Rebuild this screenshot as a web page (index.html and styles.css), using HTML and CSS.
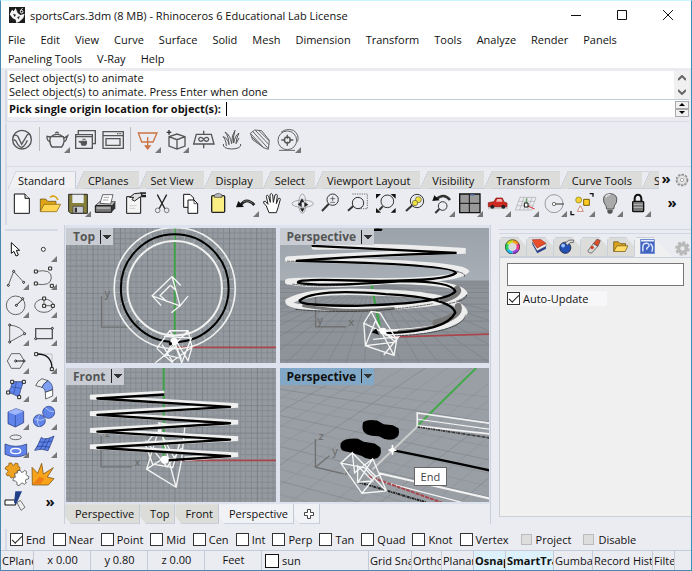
FILE: index.html
```
<!DOCTYPE html>
<html lang="en">

<head>
    <meta charset="UTF-8">
    <meta name="viewport" content="width=device-width, initial-scale=1.0">
    <title>sportsCars.3dm - Rhinoceros 6</title>
    <link rel="stylesheet" href="styles.css">
</head>

<body>
    <header class="title-bar">
        <svg class="app-icon" viewBox="0 0 48 48">
            <rect width="48" height="48" fill="#1c1c1c" />
            <path d="M2 22L9 8l5 5 6-10 6 15 8 6 13-4-4 13-12 11-9 4-2-10-9-4z" fill="#f2f2f2" />
            <path d="M12 20l9 3-4 7zM24 32l8-6-2 10z" fill="#1c1c1c" />
            <path d="M41 4q-7 3-7 10a4 4 0 1 0 3-4" fill="none" stroke="#fff" stroke-width="3" />
        </svg>
        <span class="title">sportsCars.3dm (8 MB) - Rhinoceros 6 Educational Lab License</span>
        <button class="win-btn" aria-label="Minimize"><svg viewBox="0 0 10 10"><path d="M0 5.5h10" /></svg></button>
        <button class="win-btn" aria-label="Maximize"><svg viewBox="0 0 10 10"><path d="M.5 .5h9v9h-9z" /></svg></button>
        <button class="win-btn" aria-label="Close"><svg viewBox="0 0 10 10"><path d="M0 0l10 10M10 0L0 10" /></svg></button>
    </header>

    <nav class="menu">
        <button>File</button>
        <button>Edit</button>
        <button>View</button>
        <button>Curve</button>
        <button>Surface</button>
        <button>Solid</button>
        <button>Mesh</button>
        <button>Dimension</button>
        <button>Transform</button>
        <button>Tools</button>
        <button>Analyze</button>
        <button>Render</button>
        <button>Panels</button>
        <button>Paneling Tools</button>
        <button>V-Ray</button>
        <button>Help</button>
    </nav>

    <section class="command">
        <div class="history">
            <div class="history-text">
                <p>Select object(s) to animate</p>
                <p>Select object(s) to animate. Press Enter when done</p>
            </div>
            <div class="scroll">
                <button aria-label="Scroll up"><svg viewBox="0 0 8 6"><path d="M0 5l4-4 4 4" /></svg></button>
                <button aria-label="Scroll down"><svg viewBox="0 0 8 6"><path d="M0 1l4 4 4-4" /></svg></button>
            </div>
        </div>
        <div class="prompt">
            <label for="cmd">Pick single origin location for object(s):</label>
            <input type="text" id="cmd">
            <div class="spin">
                <button aria-label="Previous"><svg viewBox="0 0 6 3"><path d="M0 3l3-3 3 3z" /></svg></button>
                <button aria-label="Next"><svg viewBox="0 0 6 3"><path d="M0 0l3 3 3-3z" /></svg></button>
            </div>
        </div>
    </section>

    <!-- V-Ray toolbar -->
    <section class="toolbar vray">
        <button class="tool" aria-label="V-Ray"><svg viewBox="24 3 84 84">
            <g class="ln thick"><circle cx="66" cy="44" r="28" /><path d="M42 32q7-4 12 3l11 23 17-29q6-5 9 1M40 46q5-3 9 4 8 17 17 17 9-3 16-21" /></g></svg></button>
        <i class="sep"></i>
        <button class="tool more" aria-label="Render"><svg viewBox="126 3 84 84">
            <g class="ln thick"><path d="M149 35q-7 16 4 31h29q11-14 5-31zM150 35q18-14 36 0M163 25q5-7 10 0M150 52q-14-5-12-18l9 2M188 40l12-8-6 15-6 5" /></g></svg></button>
        <button class="tool" aria-label="Frame buffer"><svg viewBox="210 3 84 84">
            <g class="ln thick"><path d="M232 28v-11h51v39h-8M224 29h50v41h-50zM224 35h50" /></g>
            <path d="M239 47h19q2 9-4 15h-12q-3-5-3-8l-6-2v-5l6 2zM244 44h10v-3h-10z" fill="#555" /></svg></button>
        <button class="tool" aria-label="Render window"><svg viewBox="294 3 84 84">
            <g class="ln thick"><path d="M306 20h61v50h-61zM306 32h61M315 41h42v20h-42z" /></g><path d="M348 26h14" stroke="#555" stroke-width="4" stroke-dasharray="3 2" /></svg></button>
        <i class="sep"></i>
        <button class="tool more" aria-label="Rectangle light"><svg viewBox="397 3 84 84">
            <g class="ln orange"><path d="M410 24h56l-12 27h-34zM438 36v30" /><path d="M431 63h14l-7 9z" fill="#cb7443" /></g></svg></button>
        <button class="tool more" aria-label="Proxy"><svg viewBox="481 3 84 84">
            <g class="ln thick"><path d="M502 35l24-8 24 8v28l-24 9-24-9zM502 35l24 9 24-9M526 44v28" /></g>
            <path d="M495 22h14M502 15v14" stroke="#333" stroke-width="4" /></svg></button>
        <button class="tool" aria-label="Infinite plane"><svg viewBox="565 3 84 84">
            <g class="ln thick"><path d="M584 28h45l8 29h-61zM606 28v-11M606 57v13M606 43q-6-8-12-5-6 5 0 10 6 3 12-5 6-8 12-5 6 5 0 10-6 3-12-5" /></g></svg></button>
        <button class="tool" aria-label="Fur"><svg viewBox="649 3 84 84">
            <g class="ln thin"><path d="M665 57q-2 14 25 15 30-1 27-15M674 63q-1-20-10-28 15 4 18 24-1-26-12-38 16 9 20 35 0-26 10-40-7 22-4 38 4-22 16-30-8 14-9 32l9-17" /></g></svg></button>
        <button class="tool" aria-label="Clipper"><svg viewBox="733 3 84 84">
            <g class="ln"><path d="M746 25l13-10 21 2 23 29-3 27-14-5-33-24zM746 25l40 43M753 19l47 52M761 16l41 43M771 16l32 32M748 34l38 34" /></g></svg></button>
        <button class="tool more" aria-label="Lens"><svg viewBox="817 3 84 84">
            <g class="ln"><circle cx="857" cy="46" r="28" /><path d="M838 22q15-13 37-6 19 12 13 34M832 76h48" /></g>
            <g class="ln thick"><circle cx="857" cy="45" r="9" /><path d="M857 29v12M857 50v12M839 45h12M863 45h12" /></g></svg></button>
    </section>

    <section class="tabs">
        <button class="tab active">Standard</button>
        <button class="tab">CPlanes</button>
        <button class="tab">Set View</button>
        <button class="tab">Display</button>
        <button class="tab">Select</button>
        <button class="tab">Viewport Layout</button>
        <button class="tab">Visibility</button>
        <button class="tab">Transform</button>
        <button class="tab">Curve Tools</button>
        <button class="tab cut">Surface Tools</button>
        <button class="chev" aria-label="More tabs">»</button>
        <button class="gear" aria-label="Toolbar options"><svg viewBox="0 0 42 42">
            <circle cx="21" cy="21" r="17" fill="none" stroke="#888" stroke-width="4" stroke-dasharray="7 4" />
            <circle cx="21" cy="21" r="14" fill="#e4e4e4" stroke="#999" stroke-width="2" /><circle cx="21" cy="21" r="5" fill="#fff" stroke="#888" stroke-width="2" /></svg></button>
    </section>

    <!-- Standard toolbar -->
    <section class="toolbar standard">
        <button class="tool" aria-label="New"><svg viewBox="24 195 84 84">
            <path d="M43 207h32l13 13v45H43z" fill="#fff" stroke="#111" stroke-width="3" /><path d="M75 207v13h13" fill="#ddd" stroke="#111" stroke-width="3" /></svg></button>
        <button class="tool" aria-label="Open"><svg viewBox="108 195 84 84">
            <path d="M121 260v-38h16l6 7h25v9" fill="#dfa517" stroke="#5a4308" stroke-width="2" /><path d="M121 260l11-22h50l-12 22z" fill="#ffd552" stroke="#7b5b0a" stroke-width="2" />
            <path d="M150 217q15-10 24 8" fill="none" stroke="#dba40f" stroke-width="5" /></svg></button>
        <button class="tool more" aria-label="Save"><svg viewBox="192 195 84 84">
            <path d="M206 208h56v57h-50l-6-6z" fill="#86803b" stroke="#222" stroke-width="3" /><path d="M217 209h34v25h-34z" fill="#e9edf2" /><path d="M219 244h31v20h-31z" fill="#c9cbd2" stroke="#333" stroke-width="2" /><path d="M224 248h7v14h-7z" fill="#333" /></svg></button>
        <button class="tool" aria-label="Print"><svg viewBox="276 195 84 84">
            <path d="M287 241l12-11h47l-10 14z" fill="#bbb" stroke="#222" stroke-width="2" /><path d="M300 235l8-26h31l-7 28z" fill="#fff" stroke="#222" stroke-width="2" /><path d="M286 242h49v20h-49z" fill="#777" stroke="#111" stroke-width="3" /><path d="M335 242l11-12v20l-11 12z" fill="#333" /><path d="M290 249h41" stroke="#ddd" stroke-width="3" /><path d="M311 217h16M309 225h16" stroke="#777" stroke-width="2" /></svg></button>
        <button class="tool" aria-label="Properties"><svg viewBox="360 195 84 84">
            <path d="M380 215h42v50h-42z" fill="#f5f5f5" stroke="#111" stroke-width="3" /><path d="M388 242h22M388 250h18" stroke="#bbb" stroke-width="2" /><path d="M389 217l14-11 20-2 6 8-12 6-13 10-8-4 5-7z" fill="#ddd" stroke="#222" stroke-width="3" /><path d="M421 202h17v15h-13z" fill="#222" /><path d="M427 208h11" stroke="#ddd" stroke-width="3" /></svg></button>
        <button class="tool" aria-label="Cut"><svg viewBox="444 195 84 84">
            <path d="M472 209l23 43M500 209l-23 43" stroke="#222" stroke-width="4" /><g fill="none" stroke="#777" stroke-width="3"><circle cx="473" cy="256" r="7" /><circle cx="500" cy="256" r="7" /></g></svg></button>
        <button class="tool" aria-label="Copy"><svg viewBox="528 195 84 84">
            <path d="M551 208h19l11 11v28h-30z" fill="#fff" stroke="#111" stroke-width="3" /><path d="M564 225h18l11 11v29h-29z" fill="#fff" stroke="#111" stroke-width="3" /><path d="M582 225v11h11" fill="none" stroke="#111" stroke-width="2" /></svg></button>
        <button class="tool" aria-label="Paste"><svg viewBox="612 195 84 84">
            <rect x="635" y="212" width="39" height="50" rx="3" fill="#fbef83" stroke="#222" stroke-width="4" /><path d="M643 217v-7l8-4h8l7 4v7z" fill="#bbb" stroke="#333" stroke-width="2" /></svg></button>
        <button class="tool more" aria-label="Undo"><svg viewBox="696 195 84 84">
            <path d="M722 240q17-25 41 0" fill="none" stroke="#222" stroke-width="8" /><path d="M708 247l7-19 17 18z" fill="#111" /><path d="M729 231q15-9 29 5" fill="none" stroke="#999" stroke-width="2" /></svg></button>
        <button class="tool" aria-label="Pan"><svg viewBox="780 195 84 84">
            <path d="M807 263l-8-20-8-9q-2-7 5-5l8 9-5-24q2-8 7 0l5 18-1-23q4-7 8 0l2 23 5-22q6-5 7 1l-3 25 6-15q6-4 6 2l-7 25-5 15z" fill="#fff" stroke="#222" stroke-width="3" /></svg></button>
        <button class="tool" aria-label="Rotate view"><svg viewBox="864 195 84 84">
            <g fill="none" stroke="#888" stroke-width="2"><ellipse cx="908" cy="236" rx="32" ry="11" /><ellipse cx="907" cy="236" rx="11" ry="29" /></g><path d="M893 238l12-9v18zM925 239l-12-8v15zM906 220l7 12h-14zM907 262l-7-12h14z" fill="#222" /></svg></button>
        <button class="tool" aria-label="Zoom dynamic"><svg viewBox="48 75 84 84">
            <g class="lens"><path d="M86 117l-20 21" /><circle cx="98" cy="104" r="17" /></g><path d="M91 101h14M98 94v14M91 112h14" stroke="#333" stroke-width="2" /></svg></button>
        <button class="tool" aria-label="Zoom window"><svg viewBox="132 75 84 84">
            <path d="M157 87h45v44h-30" fill="none" stroke="#333" stroke-width="2" stroke-dasharray="4 3" /><g class="lens"><path d="M160 123l-16 14" /><circle cx="174" cy="114" r="17" /></g></svg></button>
        <button class="tool" aria-label="Zoom extents"><svg viewBox="216 75 84 84">
            <path d="M228 87h15l-15 14zM287 87h-15l15 14zM228 143h15l-15-14zM287 143h-15l15-14z" fill="#111" /><g class="lens"><path d="M248 124l-10 11" /><circle cx="262" cy="109" r="19" /></g></svg></button>
        <button class="tool" aria-label="Zoom selected"><svg viewBox="300 75 84 84">
            <g class="lens"><path d="M337 121l-19 17" /><circle cx="351" cy="108" r="20" /></g><circle cx="355" cy="104" r="9" fill="#f2e23c" stroke="#554" stroke-width="2" /><circle cx="345" cy="114" r="8" fill="#f2e23c" stroke="#554" stroke-width="2" /></svg></button>
        <button class="tool more" aria-label="Undo view"><svg viewBox="384 75 84 84">
            <path d="M409 103q22-21 41 2" fill="none" stroke="#333" stroke-width="8" /><path d="M397 108l6-17 16 15z" fill="#111" /><g class="lens"><path d="M418 132l-12 12" /><circle cx="428" cy="123" r="13" /></g></svg></button>
        <button class="tool more" aria-label="Four views"><svg viewBox="468 75 84 84">
            <path d="M479 87h61v56h-61z" fill="#999" stroke="#111" stroke-width="4" /><path d="M480 115h60M508 88v55" stroke="#111" stroke-width="3" /><path d="M511 90h12" stroke="#5577bb" stroke-width="4" /></svg></button>
        <button class="tool more" aria-label="Shade car"><svg viewBox="552 75 84 84">
            <path d="M564 129h60" stroke="#ccc" stroke-width="7" /><path d="M565 125v-12l17-3 6-11h19l5 12 9 3v11z" fill="#d12820" stroke="#7b100c" stroke-width="2" /><path d="M592 102h12l4 8h-20z" fill="#f5b9b5" /><circle cx="577" cy="125" r="6" fill="#222" /><circle cx="610" cy="125" r="6" fill="#222" /></svg></button>
        <button class="tool more" aria-label="Construction plane"><svg viewBox="636 75 84 84">
            <path d="M660 97h48l-13 38h-49zM656 109h48M651 122h48M672 97l-13 38M684 97l-13 38M696 97l-13 38" fill="none" stroke="#aaa" stroke-width="2" /><path d="M679 120v-20" stroke="#3c9a3c" stroke-width="3" /><path d="M679 121l25 11" stroke="#d33" stroke-width="3" /><path d="M673 114h11v12h-11z" fill="#fff" stroke="#111" stroke-width="3" /></svg></button>
        <button class="tool more" aria-label="Osnap circle"><svg viewBox="720 75 84 84">
            <circle cx="762" cy="116" r="27" fill="none" stroke="#999" stroke-width="3" /><circle cx="762" cy="117" r="5" fill="#fff" stroke="#333" stroke-width="2" /><path d="M767 117h25" stroke="#333" stroke-width="3" /></svg></button>
        <button class="tool more" aria-label="Selection filter"><svg viewBox="804 75 84 84">
            <circle cx="836" cy="105" r="9" fill="#f5d234" stroke="#8a7411" stroke-width="2" /><path d="M851 103h17v18h-17z" fill="#ffcd22" stroke="#775d00" stroke-width="3" /><path d="M841 122l9 17h-18z" fill="#fff" stroke="#b75836" stroke-width="2" /><path d="M869 86h10v9M813 138v11h10" fill="none" stroke="#111" stroke-width="4" /></svg></button>
        <button class="tool more" aria-label="Lights"><svg viewBox="888 75 84 84">
            <path d="M920 132q0-10-8-19-7-26 18-27 26 1 19 27-8 9-8 19z" fill="#aaa" stroke="#555" stroke-width="3" /><path d="M917 97q4-9 14-8" stroke="#eee" stroke-width="4" fill="none" /><path d="M922 134h16v8l-5 4h-7l-4-4z" fill="#555" /></svg></button>
        <button class="tool more" aria-label="Lock"><svg viewBox="972 75 84 84">
            <path d="M1004 110v-9q1-12 10-12t10 12v9" fill="none" stroke="#111" stroke-width="6" /><rect x="998" y="109" width="33" height="31" rx="3" fill="#777" stroke="#111" stroke-width="4" /><path d="M1001 118h27M1001 127h27" stroke="#bbb" stroke-width="3" /></svg></button>
        <button class="chev" aria-label="More tools">»</button>
    </section>

    <main class="work">
        <aside class="sidebar">
            <button class="tool" aria-label="Select"><svg viewBox="6 27 84 84">
                <path d="M34 50v32l8-6 6 14 7-3-6-14h10z" fill="#fff" stroke="#111" stroke-width="3" /></svg></button>
            <button class="tool more" aria-label="Point"><svg viewBox="90 27 84 84"><circle cx="130" cy="70" r="6" fill="#fff" stroke="#333" stroke-width="3" /></svg></button>
            <button class="tool more" aria-label="Polyline"><svg viewBox="6 111 84 84">
                <path class="ln" d="M25 178l16-42 30 33" /><g class="dot"><circle cx="25" cy="178" r="3" /><circle cx="41" cy="136" r="3" /><circle cx="71" cy="169" r="3" /></g></svg></button>
            <button class="tool more" aria-label="Curve"><svg viewBox="90 111 84 84">
                <path class="ln" d="M108 136q48-8 46 20-2 26-46 18" /><path class="box" d="M103 132h9v9h-9zM146 123h9v9h-9zM103 168h9v9h-9zM151 175h9v9h-9z" /></svg></button>
            <button class="tool more" aria-label="Circle"><svg viewBox="6 195 84 84">
                <circle class="ln" cx="47" cy="238" r="28" /><path d="M49 238l19-19" stroke="#111" stroke-width="3" /><g class="dot"><circle cx="49" cy="238" r="3" /><circle cx="68" cy="218" r="3" /></g></svg></button>
            <button class="tool more" aria-label="Ellipse"><svg viewBox="90 195 84 84">
                <ellipse class="ln" cx="132" cy="239" rx="28" ry="20" /><path class="ln" d="M132 218v21h27" /><path class="box" d="M128 213h9v9h-9zM128 235h9v9h-9zM154 235h9v9h-9z" /></svg></button>
            <button class="tool more" aria-label="Arc"><svg viewBox="6 279 84 84">
                <path class="ln" d="M29 297q35 4 45 26l-45 25z" /><g class="dot"><circle cx="29" cy="297" r="3" /><circle cx="74" cy="323" r="3" /><circle cx="29" cy="348" r="3" /></g></svg></button>
            <button class="tool more" aria-label="Rectangle"><svg viewBox="90 279 84 84">
                <path class="ln thick" d="M107 308h50v30h-50z" /><g class="dot"><circle cx="157" cy="307" r="3" /><circle cx="107" cy="338" r="3" /></g></svg></button>
            <button class="tool more" aria-label="Polygon"><svg viewBox="6 363 84 84">
                <path class="ln" d="M34 383h26l13 22-13 22H34l-12-22z" /><path d="M47 405h24" stroke="#111" stroke-width="3" /><g class="dot"><circle cx="47" cy="405" r="3" /><circle cx="72" cy="405" r="3" /></g></svg></button>
            <button class="tool more" aria-label="Fillet curves"><svg viewBox="90 363 84 84">
                <path d="M108 384h48v45" fill="none" stroke="#aaa" stroke-width="2" /><path d="M108 384q48-2 48 45" fill="none" stroke="#111" stroke-width="4" /><path class="box" d="M104 380h9v9h-9zM151 425h9v9h-9z" /></svg></button>
            <button class="tool more" aria-label="Surface from points"><svg viewBox="6 447 84 84">
                <path class="blue" d="M36 467h35q-11 24-14 46-16-9-33-14 12-14 12-32z" /><path d="M34 483q16 1 31 5M49 467q-2 21-9 37" stroke="#2c4a9a" fill="none" stroke-width="2" /><path class="box" d="M32 463h9v9h-9zM67 463h9v9h-9zM20 495h9v9h-9zM53 509h9v9h-9z" /></svg></button>
            <button class="tool more" aria-label="Loft"><svg viewBox="90 447 84 84">
                <path d="M107 479q5-15 19-21l18 6q-12 6-18 20z" fill="#eee" stroke="#222" stroke-width="2" /><path d="M144 464q14 8 14 27l-22 8q0-12-10-15 5-13 18-20z" fill="#7f9ff0" stroke="#1c2f70" stroke-width="2" /><path d="M136 499l22-8v19l-21 9z" fill="#fff" stroke="#222" stroke-width="2" /></svg></button>
            <button class="tool more" aria-label="Box"><svg viewBox="6 531 84 84">
                <path class="blue" d="M24 558l24-10 23 8v34l-25 13-22-10z" /><path d="M24 558l22 9 25-11-23-8z" fill="#9fb5ff" /><path d="M46 567v36" stroke="#284199" stroke-width="2" /></svg></button>
            <button class="tool more" aria-label="Boolean union"><svg viewBox="90 531 84 84">
                <circle class="blue" cx="146" cy="559" r="18" /><circle class="blue" cx="118" cy="584" r="18" /><path d="M103 578q18 10 32 0M118 567q-11 17 0 34M136 545q13 14 27 12" fill="none" stroke="#dce4ff" stroke-width="2" /></svg></button>
            <button class="tool more" aria-label="Project"><svg viewBox="6 615 84 84">
                <ellipse class="ln" cx="47" cy="634" rx="17" ry="7" /><path class="blue" d="M15 654q33 14 65 0v31q-32 15-65 0z" /><ellipse cx="47" cy="675" rx="15" ry="8" fill="#6687e7" stroke="#fff" stroke-width="4" /></svg></button>
            <button class="tool more" aria-label="Mesh"><svg viewBox="90 615 84 84">
                <path class="blue" d="M104 673q12-18 20-39 10 11 38-4-8 23-18 44-20-8-40-1z" /><path d="M111 662q17-5 38 2M118 648q18 3 37-3M139 636q-8 14-18 34M151 634q-9 17-18 38" fill="none" stroke="#1d3b8c" stroke-width="2" /></svg></button>
            <button class="tool" aria-label="Plugins"><svg viewBox="6 699 84 84">
                <path d="M18 722l8-3 1-8 8 0 3 7 5-1 3-6 8 2 0 8 6 3-1 8-8 3 1 5 6 5-4 7-8-2-5 4-8 2-4-7-8 0-3-6 6-6-2-5-7-3z" fill="#eda321" stroke="#7b4e05" stroke-width="2" /><path d="M44 742l8-1 1-7 8-1 3 6 6-1 4-5 6 4-2 8 3 4 6 3-2 7-7 1-2 5 3 6-6 4-6-4-6 3-3 5-7-2 0-8-5-4-7-1 1-7 6-3z" fill="#fff" stroke="#333" stroke-width="2" /></svg></button>
            <button class="tool" aria-label="Explode"><svg viewBox="90 699 84 84">
                <path d="M96 724l17 18 12-30 5 32 30-19-18 28 20 5-17 19H97z" fill="#f7a31c" stroke="#6b4307" stroke-width="2" /><path d="M99 773l20-21 14 7-12 14z" fill="#ed7b16" /></svg></button>
            <button class="tool" aria-label="Trim"><svg viewBox="6 783 84 84">
                <path d="M15 822h32v15H15z" fill="#fff" stroke="#111" stroke-width="3" /><path d="M46 796h20l-17 38-7-3z" fill="#20408a" /><path d="M51 830l10-7 14 21-12 9z" fill="#eee" stroke="#777" stroke-width="3" /></svg></button>
            <button class="tool chev" aria-label="More tools">»</button>
        </aside>

        <section class="views">
            <div class="view-grid">
                <div class="view">
                    <svg viewBox="6 9 630 405" preserveAspectRatio="xMidYMid slice">
                        <defs>
                            <pattern id="grid" width="82" height="82" patternUnits="userSpaceOnUse" x="4" y="40">
                                <path d="M16 0v82M33 0v82M49 0v82M66 0v82M0 16h82M0 33h82M0 49h82M0 66h82" stroke="#838a90" stroke-width="3" />
                                <path d="M1 0v82M0 1h82" stroke="#757b82" stroke-width="3" />
                            </pattern>
                        </defs>
                        <rect width="700" height="500" fill="#949a9f" />
                        <rect width="700" height="500" fill="url(#grid)" />
                        <path d="M333 9v359" stroke="#3fa447" stroke-width="6" />
                        <path d="M333 368h310" stroke="#a9464d" stroke-width="5" />
                        <path d="M113 214v93h92" class="axis" />
                        <text x="122" y="216">y</text>
                        <text x="212" y="305">x</text>
                        <g fill="none">
                            <circle cx="333" cy="190" r="162" stroke="#b4b8bb" stroke-width="34" stroke-dasharray="2 31" />
                            <circle cx="333" cy="190" r="182" stroke="#f1f1f1" stroke-width="5" />
                            <circle cx="333" cy="190" r="162" stroke="#000" stroke-width="6" />
                            <circle cx="333" cy="190" r="142" stroke="#f1f1f1" stroke-width="6" />
                            <path class="wire" d="M325 155l-60 58 27 29M325 155l26 27M325 155l24 88 24-29M349 243l-26 21M265 213l84 30M320 181l-31 31 21 19M320 181l16 15" />
                            <path class="wire" d="M279 371l39-53h55l12 49-62 45-44-41M318 318l55 90 12-41M300 335l83 5-29 74-18-49-61 49M306 388l67-70M295 360l33 54M330 346l-23 45 45 10z" />
                        </g>
                        <circle cx="331" cy="350" r="11" fill="#fff" />
                        <circle cx="320" cy="357" r="5" />
                    </svg>
                    <button class="view-label"><b>Top</b></button>
                </div>
                <div class="view">
                    <svg viewBox="12 9 630 405" preserveAspectRatio="xMidYMid slice">
                        <defs>
                            <linearGradient id="sky" x1="0" y1="0" x2="0" y2="1">
                                <stop offset="0" stop-color="#9ba2aa" />
                                <stop offset="1" stop-color="#a7aeb6" />
                            </linearGradient>
                        </defs>
                        <rect width="660" height="167" fill="url(#sky)" />
                        <rect y="166" width="660" height="260" fill="#8d9398" />
                        <path d="M0 172h660M0 180h660M0 190h660M0 203h660M0 219h660M0 238h660M0 261h660M0 289h660M0 322h660M0 361h660M0 406h660" stroke="#7b8187" stroke-width="2" />
                        <path d="M290 166L-700 414M290 166L-500 414M290 166L-340 414M290 166L-220 414M290 166L-120 414M290 166L-40 414M290 166L30 414M290 166L95 414M290 166l-135 248M290 166l-80 248M290 166l-25 248M290 166l30 248M290 166l85 248M290 166l140 248M290 166l200 248M290 166l270 248M290 166l350 248M290 166l450 248M290 166l570 248M290 166l720 248M290 166l950 248" stroke="#7b8187" stroke-width="2" />
                        <path d="M287 180l25 125" stroke="#3fa447" stroke-width="7" />
                        <path d="M340 337l302-9" stroke="#a9464d" stroke-width="5" />
                        <path d="M119 200v106h91M119 216l27-16" class="axis" />
                        <text x="124" y="298">y</text>
                        <text x="218" y="305">x</text>
                        <!-- spring: soft band, white rims, black centre curve -->
                        <g fill="none" stroke-linecap="round">
                            <g stroke="#ededed" stroke-width="17">
                                <path d="M115 66q220-5 455 12Q220 91 36 103" />
                                <path d="M36 103q510 10 534 36-40 34-350 28Q60 164 36 170" />
                                <path d="M36 170q80 18 300-1 210 2 230 35-36 41-326 45-190 4-202-15" />
                                <path d="M38 230q67-37 260-27 250 5 268 59-20 54-232 62" stroke-width="20" />
                            </g>
                            <g stroke="#777" stroke-width="9">
                                <path d="M545 192q10 16-42 33M548 244q10 29-67 50" stroke-width="20" />
                                <path d="M83 243q130 24 270 8M370 320q120-7 160-41" />
                            </g>
                            <g stroke="#202020" stroke-width="2" stroke-dasharray="7 4">
                                <path d="M34 109q310 5 420 17M50 178q80 10 200 0M60 254q210 18 410-17M345 334q210-8 225-63M567 154q3-10-27-14M573 211q-3 20-70 27" />
                            </g>
                            <g stroke="#000" stroke-width="7">
                                <path d="M110 63q210 10 433 21-270 8-480 24" />
                                <path d="M63 108q470 10 478 36-30 28-310 23-168-6-165 6 68 14 315-4 150 1 158 31-29 35-296 43-175 0-172-16 49-37 259-19 198 11 209 56-27 56-205 61" />
                            </g>
                        </g>
                        <path d="M285 13q20-5 36-1l-4 6h-32z" />
                        <g class="wire" fill="none">
                            <path d="M286 260l-22 35 5 68 86 29 8-47-50-81zM286 260l28 53 45 39-90 11 30-75 56 104M264 295l100 48M292 344l77-8-45 55" />
                        </g>
                        <path d="M288 323l13-12 9 19z" />
                        <circle cx="322" cy="319" r="10" fill="#fff" />
                    </svg>
                    <button class="view-label"><b>Perspective</b></button>
                </div>
                <div class="view">
                    <svg viewBox="6 11 630 402" preserveAspectRatio="xMidYMid slice">
                        <rect width="700" height="500" fill="#949a9f" />
                        <rect width="700" height="500" fill="url(#grid)" />
                        <path d="M300 11v274" stroke="#3fa447" stroke-width="6" />
                        <path d="M300 287h340" stroke="#a9464d" stroke-width="5" />
                        <path d="M113 214v92h92" class="axis" />
                        <text x="125" y="218">z</text>
                        <text x="213" y="305">x</text>
                        <g class="wire" fill="none">
                            <path d="M285 175l78 12-10 100-16 80-88-54 40-130zM285 175l52 192M246 228l64 78 43-56M270 210l-25 28 22 60 60 10 20-70M249 313l51-33 53 7M285 195l50 90" />
                        </g>
                        <g fill="none" stroke="#f0f0f0" stroke-width="14" stroke-linejoin="bevel">
                            <path d="M302 86L80 98l442 25L80 147l442 26L80 197l442 25L80 246l442 24-160 12" />
                        </g>
                        <g fill="none" stroke="#000" stroke-width="7" stroke-linejoin="round">
                            <path d="M302 90l-200 12 396 25-396 24 396 25-396 25 396 24-396 24 396 25-193 13" />
                        </g>
                        <circle cx="303" cy="285" r="12" fill="#fff" />
                    </svg>
                    <button class="view-label"><b>Front</b></button>
                </div>
                <div class="view">
                    <svg viewBox="12 11 630 402" preserveAspectRatio="xMidYMid slice">
                        <rect width="660" height="430" fill="#999fa4" />
                        <g stroke="#8b9197" stroke-width="2">
                            <path d="M0 30l660 70M0 50l660 90M0 95l660 120M0 120l660 130M0 180l660 150M0 210l660 160M0 275l600 150M0 310l420 110M0 385l150 40" />
                            <path d="M120 0L0 60M190 0L0 110M330 0L0 195M400 0L0 250M530 0L0 370M600 0L20 430M660 40L150 430M660 90L220 430M660 200L370 430M660 260L450 430" />
                        </g>
                        <path d="M0 72l660 104M0 150l660 140M0 242l660 160M0 345l300 80M260 0L0 150M465 0L0 310M660 150L290 430M660 320L530 430" stroke="#7f858b" stroke-width="2" />
                        <path d="M600 11L426 182" stroke="#45a94b" stroke-width="6" />
                        <path d="M426 184L290 314" stroke="#ccc" stroke-width="6" />
                        <path d="M120 223v84l84 20M120 307l42-34" class="axis" />
                        <text x="129" y="226">z</text>
                        <text x="170" y="271">y</text>
                        <text x="207" y="330">x</text>
                        <path d="M262 174q10-11 42-6l20 11 27 3 17 9q7 25-13 32-24 7-45-8l-22-2q-34-4-26-39z" />
                        <path d="M196 235q10-15 51-13l17 9 33 5 17 12q7 29-17 34-20 6-40-9l-26-8-26-6q-14-4-9-24z" />
                        <g fill="none" stroke="#f2f2f2">
                            <path d="M642 176l-218-31v39l218 24" stroke-width="5" />
                            <path d="M426 164l216 30" stroke-width="3" />
                            <path d="M310 325l332 76" stroke-width="6" />
                            <path d="M320 350l240 63" stroke-width="4" />
                        </g>
                        <path d="M425 187l217 33" fill="none" stroke="#333" stroke-width="5" stroke-dasharray="8 2 3 2" />
                        <path d="M250 352l200 60" fill="none" stroke="#222" stroke-width="6" stroke-dasharray="8 2 3 2" />
                        <path d="M278 334l220 79" stroke="#a9464d" stroke-width="6" stroke-dasharray="12 3" />
                        <path d="M350 256q170 34 292 61" fill="none" stroke="#000" stroke-width="7" />
                        <g class="wire" fill="none">
                            <path d="M230 264l-34 31 63 90 73-7-41-96-54 42zM230 264l70 70-41 51M196 295l70 13 65 70M246 303l45 45-45 4zM270 305l30 30 20-8M291 282l-45 72" />
                        </g>
                        <path d="M338 256h24M350 241v29" stroke="#fff" stroke-width="5" />
                        <circle cx="350" cy="256" r="7" fill="#fff" />
                    </svg>
                    <button class="view-label current"><b>Perspective</b></button>
                    <span class="tooltip">End</span>
                </div>
            </div>
            <div class="view-tabs">
                <button>Perspective</button>
                <button>Top</button>
                <button>Front</button>
                <button class="active">Perspective</button>
                <button class="active" aria-label="Add viewport tab"><svg viewBox="0 0 10 10"><path d="M3.5 .5h3v3h3v3h-3v3h-3v-3h-3v-3h3z" fill="#fff" stroke="#444" /></svg></button>
            </div>
        </section>

        <aside class="panel">
            <div class="panel-tabs">
                <button aria-label="Display color"><svg viewBox="43 41 42 42">
                    <g fill="none" stroke-width="9"><path d="M64 47a16 16 0 0 1 14 8" stroke="#f8a01c" /><path d="M78 55a16 16 0 0 1 0 16" stroke="#f3358c" /><path d="M78 71a16 16 0 0 1-14 8" stroke="#963be0" /><path d="M64 79a16 16 0 0 1-14-8" stroke="#20b9ea" /><path d="M50 71a16 16 0 0 1 0-16" stroke="#24d35e" /><path d="M50 55a16 16 0 0 1 14-8" stroke="#c5e01e" /></g><circle cx="64" cy="63" r="20" fill="none" stroke="#333" stroke-width="2" /></svg></button>
                <button aria-label="Layers"><svg viewBox="122 41 46 46">
                    <path d="M123 57l15 28 27-14v-9l-27 15-15-27z" fill="#28408f" /><path d="M122 50l16 27 27-14v-8l-27 12z" fill="#eee" stroke="#333" /><path d="M122 43l26-1 17 12-27 15z" fill="#e84e27" stroke="#702" /></svg></button>
                <button aria-label="Materials"><svg viewBox="201 38 48 48">
                    <circle cx="221" cy="66" r="18" fill="#2450b4" stroke="#111" stroke-width="2" /><circle cx="214" cy="59" r="6" fill="#9bc3ff" /><path d="M221 51l11-9 15-1v8l-11 1-8 8z" fill="#ddd" stroke="#333" stroke-width="2" /></svg></button>
                <button aria-label="Libraries"><svg viewBox="285 41 44 44">
                    <path d="M290 76l17-22 13 8-18 20q-9 2-12-6z" fill="#d8d8d8" stroke="#444" stroke-width="2" /><path d="M307 54l11-13 9 5-7 16z" fill="#e24c25" stroke="#444" stroke-width="2" /><circle cx="303" cy="66" r="5" fill="#d43f20" /></svg></button>
                <button aria-label="Folder"><svg viewBox="366 42 42 42">
                    <path d="M368 77V50h13l5 5h15v8" fill="#dda51c" stroke="#5c4309" stroke-width="2" /><path d="M368 77l9-16h31l-8 16z" fill="#ffdb67" stroke="#71540d" stroke-width="2" /></svg></button>
                <button class="active" aria-label="Help"><svg viewBox="446 41 42 42">
                    <path d="M447 42h40v40h-40z" fill="#4164c0" stroke="#7590d3" stroke-width="2" /><path d="M449 46h36" stroke="#e8eeff" stroke-width="4" /><path d="M454 76V61q2-9 11-8 8 1 6 8l-6 6v4M475 54q10 8 4 23" fill="none" stroke="#dfe8ff" stroke-width="4" /></svg></button>
                <span class="panel-gear"><svg viewBox="0 0 42 42"><circle cx="21" cy="21" r="17" fill="none" stroke="#b9b9b9" stroke-width="7" stroke-dasharray="8 5" /><circle cx="21" cy="21" r="11" fill="none" stroke="#b9b9b9" stroke-width="10" /></svg></span>
            </div>
            <div class="panel-body">
                <input type="text" class="search" aria-label="Topic">
                <label class="check auto"><input type="checkbox" checked>Auto-Update</label>
            </div>
        </aside>
    </main>

    <section class="osnap">
        <label class="check"><input type="checkbox" checked>End</label>
        <label class="check"><input type="checkbox">Near</label>
        <label class="check"><input type="checkbox">Point</label>
        <label class="check"><input type="checkbox">Mid</label>
        <label class="check"><input type="checkbox">Cen</label>
        <label class="check"><input type="checkbox">Int</label>
        <label class="check"><input type="checkbox">Perp</label>
        <label class="check"><input type="checkbox">Tan</label>
        <label class="check"><input type="checkbox">Quad</label>
        <label class="check"><input type="checkbox">Knot</label>
        <label class="check"><input type="checkbox">Vertex</label>
        <label class="check off"><input type="checkbox" disabled>Project</label>
        <label class="check off"><input type="checkbox" disabled>Disable</label>
    </section>

    <footer class="status">
        <button>CPlane</button>
        <span>x 0.00</span>
        <span>y 0.80</span>
        <span>z 0.00</span>
        <span>Feet</span>
        <button class="layer"><i></i>sun</button>
        <button>Grid Snap</button>
        <button>Ortho</button>
        <button>Planar</button>
        <button class="on">Osnap</button>
        <button class="on">SmartTrack</button>
        <button>Gumball</button>
        <button>Record History</button>
        <button>Filter</button>
        <span></span>
    </footer>
</body>

</html>
```
FILE: styles.css
```
* {
    margin: 0;
    padding: 0;
    box-sizing: border-box;
}

body {
    min-height: 100vh;
    display: flex;
    flex-direction: column;
    background: #ebecf1;
    border: 1px solid #4a88b0;
    border-top-color: #c9f7ff;
    border-right-color: #2e93bd;
    font-family: "Open Sans", "Noto Sans", sans-serif;
    font-size: 11px;
    line-height: 15px;
    color: #111;
    overflow: hidden;
}

button,
input {
    font: inherit;
    color: inherit;
    background: none;
    border: none;
}

button,
label {
    white-space: nowrap;
}

svg {
    display: block;
}

/* title and menu */
.title-bar {
    display: flex;
    align-items: center;
    height: 28px;
    padding-left: 8px;
    background: #fff;
}

.app-icon {
    width: 16px;
    height: 16px;
}

.title {
    flex: 1;
    padding-left: 5px;
    white-space: nowrap;
}

.win-btn {
    width: 46px;
    height: 26px;
    display: grid;
    place-items: center;
}

.win-btn svg {
    width: 10px;
    height: 10px;
    fill: none;
    stroke: #111;
}

.menu {
    display: flex;
    flex-wrap: wrap;
    column-gap: 15px;
    padding: 1px 7px 0;
    background: #fff;
}

.menu button {
    height: 19px;
}

/* command area */
.command {
    margin: 2px 2px 0 4px;
    padding: 1px 0 4px 1px;
    border-left: 2px solid #d5dae5;
    border-bottom: 1px solid #d5dae5;
}

.history {
    display: flex;
    background: #fff;
    border-bottom: 1px solid #c3cad8;
}

.history-text {
    flex: 1;
    height: 28px;
}

.history-text p {
    line-height: 14px;
    padding-left: 1px;
}

.scroll {
    width: 15px;
    background: #f0f0f0;
}

.scroll button {
    width: 15px;
    height: 14px;
    display: grid;
    place-items: center;
}

.scroll svg {
    width: 8px;
    height: 6px;
    fill: none;
    stroke: #666;
    stroke-width: 2;
}

.prompt {
    display: flex;
    align-items: center;
    height: 17px;
    padding-left: 1px;
    background: #fff;
}

.prompt label {
    font-weight: bold;
}

.prompt input {
    flex: 1;
    min-width: 0;
    height: 14px;
    margin-left: 5px;
    border-left: 1px solid #000;
}

.spin {
    width: 14px;
}

.spin button {
    width: 14px;
    height: 8px;
    display: grid;
    place-items: center;
    background: #f0f0f0;
    border: 1px solid #aaa;
}

.spin svg {
    width: 6px;
    height: 3px;
}

/* toolbars */
.toolbar {
    display: flex;
    padding-left: 1px;
    margin-left: 4px;
    border-left: 2px solid #d5dae5;
}

.vray {
    height: 44px;
    margin-top: 1px;
    padding-top: 3px;
    border-bottom: 1px solid #d5dae5;
}

.standard {
    height: 36px;
    padding-top: 1px;
}

.tool {
    position: relative;
    flex: none;
    width: 28px;
    height: 28px;
}

.tool svg {
    width: 28px;
    height: 28px;
}

.more::after {
    content: "";
    position: absolute;
    right: 1px;
    bottom: 1px;
    border-bottom: 6px solid #777;
    border-left: 6px solid transparent;
}

.sep {
    width: 1px;
    height: 24px;
    margin: 1px 3px;
    background: #bbb;
}

.ln {
    fill: none;
    stroke: #666;
    stroke-width: 3;
}

.thick {
    stroke: #555;
    stroke-width: 4;
}

.thin {
    stroke: #555;
}

.orange {
    stroke: #cb7443;
    stroke-width: 4;
}

.lens {
    fill: none;
    stroke: #333;
    stroke-width: 3;
}

.lens path {
    stroke-width: 6;
}

.box,
.dot {
    fill: #fff;
    stroke: #222;
    stroke-width: 3;
}

.blue {
    fill: #5f83e8;
    stroke: #1c2f70;
    stroke-width: 2;
}

.chev {
    font-size: 15px;
    font-weight: bold;
    text-align: center;
}

.standard .chev {
    width: 28px;
    height: 24px;
    margin-left: 6px;
}

.tabs {
    display: flex;
    height: 22px;
    margin-left: 4px;
    padding: 4px 0 0 1px;
    border-left: 2px solid #d5dae5;
}

.tab {
    position: relative;
    padding: 0 10px 0 12px;
    background: #dcdcda;
    border-top: 1px solid #d3d7e0;
    border-bottom: 1px solid #c9cfdb;
}

.tab::before {
    content: "";
    position: absolute;
    left: 0;
    top: -1px;
    width: 8px;
    height: 18px;
    background: linear-gradient(to bottom right, #ebecf1 47%, #bcc4d2 50%, #dcdcda 54%);
}

.tab.active {
    padding: 0 10px;
    background: #f1f1f4;
    border-right: 1px solid #c3cad8;
    border-bottom-color: #ebecf1;
}

.tab.active::before {
    background: linear-gradient(to bottom right, #ebecf1 47%, #bcc4d2 50%, #f1f1f4 54%);
}

.tab.cut {
    flex: 1;
    min-width: 0;
    padding-right: 0;
    overflow: hidden;
    text-align: left;
}

.tabs .chev {
    width: 14px;
    height: 15px;
}

.gear {
    width: 18px;
    padding-left: 2px;
}

.gear svg {
    width: 14px;
    height: 14px;
}

/* work area */
.work {
    flex: 1;
    display: flex;
}

.sidebar {
    display: grid;
    grid-template-columns: 28px 28px;
    align-content: start;
    width: 63px;
    padding: 4px 0 0 1px;
}

.sidebar::before {
    content: "";
    grid-column: 1 / 3;
    height: 4px;
    margin-left: 3px;
    border-top: 2px solid #d5dae5;
}

.sidebar .chev {
    padding-left: 12px;
}

.views {
    flex: 1;
    display: flex;
    flex-direction: column;
    border-left: 1px solid #c9cfdb;
    border-right: 1px solid #c9cfdb;
    margin-bottom: 5px;
}

.view-grid {
    flex: 1;
    display: grid;
    grid-template-columns: 1fr 1fr;
    grid-template-rows: 1fr 1fr;
    gap: 5px 4px;
    padding: 3px 1px 2px;
    background: #dde3ee;
}

.view {
    position: relative;
    display: grid;
    min-width: 0;
}

.view > svg {
    grid-area: 1 / 1;
    width: 100%;
    height: 100%;
    min-height: 134px;
}

.view text {
    font-size: 33px;
    fill: #666;
}

.axis {
    fill: none;
    stroke: #707070;
    stroke-width: 4;
}

.wire {
    stroke: #f5f5f5;
    stroke-width: 4;
}

.view-label {
    grid-area: 1 / 1;
    place-self: start;
    display: flex;
    align-items: center;
    height: 17px;
    padding-left: 7px;
    background: #c9cdd3;
    font-size: 12px;
    color: #555;
}

.view-label::after {
    content: "";
    width: 12px;
    height: 14px;
    margin-left: 5px;
    border-left: 1px solid #222;
    background: conic-gradient(from 315deg at 50% 100%, #333 90deg, transparent 0) 2px 5px / 8px 4px no-repeat;
}

.view-label.current {
    background: #82a8c8;
    color: #111;
}

.tooltip {
    position: absolute;
    left: 64%;
    top: 99px;
    padding: 1px 6px;
    background: #fff;
    border: 1px solid #666;
    color: #444;
}

.view-tabs {
    display: flex;
    height: 20px;
}

.view-tabs button {
    padding: 0 5px 0 10px;
    background: #dcdcd8;
    border-right: 1px solid #c3cad8;
    border-bottom: 1px solid #c9cfdb;
    clip-path: polygon(0 0, 100% 0, 100% 100%, 6px 100%, 0 60%);
}

.view-tabs .active {
    background: #f1f2f6;
}

.view-tabs svg {
    width: 10px;
    height: 10px;
}

/* right panel */
.panel {
    width: 200px;
    display: flex;
    flex-direction: column;
    margin-bottom: 12px;
    padding: 4px 0 0 8px;
}

.panel::before {
    content: "";
    height: 3px;
    margin-bottom: 3px;
    border-top: 1px solid #d0d6e2;
    border-bottom: 1px solid #d0d6e2;
}

.panel-tabs {
    display: flex;
    height: 20px;
}

.panel-tabs button {
    width: 27px;
    padding: 0 0 1px 5px;
    background: #dcdcda;
    border: 1px solid #c9cfdb;
    border-right: none;
    clip-path: polygon(0 3px, 3px 0, 19px 0, 100% 9px, 100% 100%, 0 100%);
}

.panel-tabs .active {
    width: 38px;
    background: #f0f0f0;
    border-bottom-color: #f0f0f0;
    clip-path: polygon(0 3px, 3px 0, 20px 0, 100% 100%, 0 100%);
}

.panel-tabs svg {
    width: 15px;
    height: 15px;
}

.panel-gear {
    margin: 4px 1px 0 auto;
}

.panel-body {
    flex: 1;
    padding: 5px 7px;
    background: #f0f0f0;
    border: 1px solid #c9cfdb;
    border-right: none;
}

.search {
    display: block;
    width: 100%;
    height: 23px;
    background: #fff;
    border: 1px solid #777;
    padding: 0 4px;
}

.check {
    display: flex;
    align-items: center;
}

.check input {
    appearance: none;
    width: 13px;
    height: 13px;
    margin-right: 3px;
    background: #fff;
    border: 1px solid #333;
}

.check input:checked::after {
    content: "";
    display: block;
    width: 9px;
    height: 4px;
    margin: 2px 0 0 1px;
    border-left: 1px solid #222;
    border-bottom: 1px solid #222;
    transform: rotate(-45deg);
}

.check input:disabled {
    width: 11px;
    height: 11px;
    margin-right: 4px;
    background: #ddd;
    border-color: #bbb;
}

.auto {
    width: 100px;
    height: 15px;
    margin-top: 5px;
    background: #f7f7f9;
}

/* bottom bars */
.osnap {
    display: flex;
    align-items: center;
    gap: 7px;
    height: 21px;
    margin-left: 4px;
    padding-left: 3px;
    border-left: 2px solid #d5dae5;
}

.osnap .off {
    margin-left: 5px;
}

.status {
    display: grid;
    grid-template-columns: 33px 57px 57px 57px 57px 1fr 43px 30px 32px 32px 48px 39px 60px 22px 16px;
    height: 20px;
    border-top: 1px solid #c3cad8;
}

.status > * {
    overflow: hidden;
    padding-left: 1px;
    border-right: 1px solid #c3cad8;
    line-height: 18px;
    text-align: left;
    white-space: nowrap;
}

.status > :last-child {
    border: none;
}

.status span {
    text-align: center;
}

.status .on {
    background: #dcf1fb;
    font-weight: bold;
}

.status .layer {
    display: flex;
    align-items: center;
    gap: 3px;
    padding-left: 3px;
}

.layer i {
    width: 14px;
    height: 14px;
    background: #fff;
    border: 1px solid #111;
}
```
